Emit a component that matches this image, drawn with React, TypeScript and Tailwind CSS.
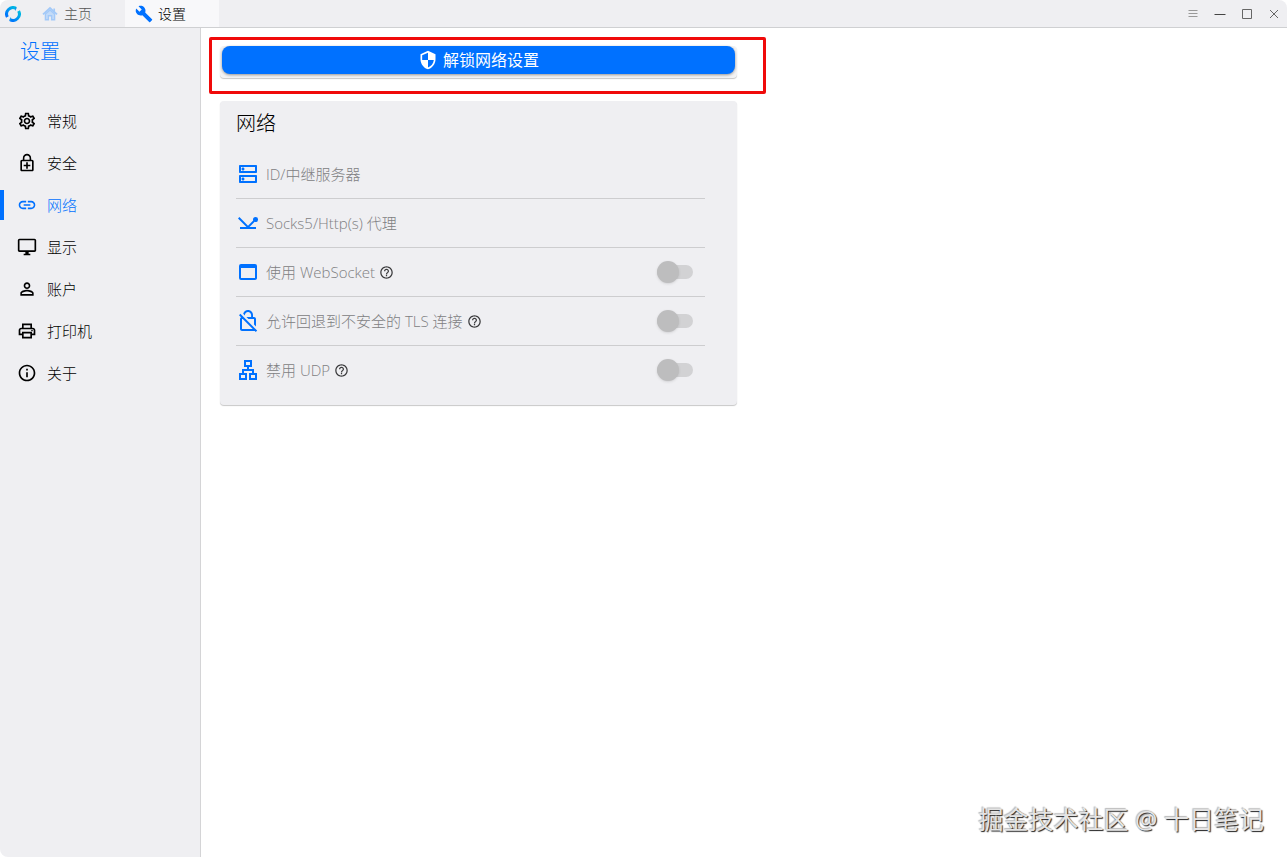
import type { ReactNode } from "react";
import type { IconType } from "react-icons";
import {
  MdBuild,
  MdHelpOutline,
  MdInfoOutline,
  MdLink,
  MdOutlineDesktopWindows,
  MdOutlineDns,
  MdOutlineEnhancedEncryption,
  MdOutlineLan,
  MdOutlineNetworkPing,
  MdOutlineNoEncryption,
  MdOutlinePrint,
  MdOutlineSettings,
  MdOutlineWebAsset,
  MdPersonOutline,
  MdSecurity,
} from "react-icons/md";

type NavItem = { label: string; icon: IconType; active?: boolean };

const navItems: NavItem[] = [
  { label: "常规", icon: MdOutlineSettings },
  { label: "安全", icon: MdOutlineEnhancedEncryption },
  { label: "网络", icon: MdLink, active: true },
  { label: "显示", icon: MdOutlineDesktopWindows },
  { label: "账户", icon: MdPersonOutline },
  { label: "打印机", icon: MdOutlinePrint },
  { label: "关于", icon: MdInfoOutline },
];

const links = [
  { label: "ID/中继服务器", icon: MdOutlineDns },
  { label: "Socks5/Http(s) 代理", icon: MdOutlineNetworkPing },
];

const toggles = [
  { id: "websocket", label: "使用 WebSocket", icon: MdOutlineWebAsset },
  { id: "tls", label: "允许回退到不安全的 TLS 连接", icon: MdOutlineNoEncryption },
  { id: "udp", label: "禁用 UDP", icon: MdOutlineLan },
];

function Logo() {
  return (
    <svg viewBox="0 0 32 32" className="size-4" fill="none" strokeWidth="6" aria-hidden="true">
      <defs>
        <linearGradient id="ring" x1="0" y1="1" x2="1" y2="0">
          <stop offset="0" stopColor="#0071ff" />
          <stop offset="1" stopColor="#00bde1" />
        </linearGradient>
      </defs>
      <path d="M22 4.8A12.7 12.7 0 0 0 4.8 22" stroke="url(#ring)" />
      <path d="M10 27.2A12.7 12.7 0 0 0 27.2 10" stroke="url(#ring)" />
      <path d="M20 1.5l3.5 2-3 7z M12 30.5l-3.5-2 3-7z" fill="#0795f0" />
    </svg>
  );
}

function HomeIcon() {
  return (
    <svg viewBox="0 0 16 16" className="size-4" fill="none" stroke="#a3c9f8" strokeWidth="1.7" aria-hidden="true">
      <path d="M1 8.4 8 2l7 6.4" />
      <path d="M12.2 2.5v3.5" />
      <path d="M3.4 8 8 4l4.6 4v5.8H9.6V9.8H6.4v4H3.4z" fill="#c3dbf8" strokeWidth="1.4" />
    </svg>
  );
}

function WindowButton({ label, children }: { label: string; children: ReactNode }) {
  return (
    <button type="button" aria-label={label} className="flex h-7 w-[27px] items-center justify-center">
      <svg viewBox="0 0 12 12" className="size-3" fill="none" stroke="#666" aria-hidden="true">
        {children}
      </svg>
    </button>
  );
}

function TitleBar() {
  return (
    <header className="flex h-7 items-stretch justify-between border-b border-[#cfd0d2] bg-[#efeff2]">
      <div className="flex items-stretch">
        <div className="flex w-[34px] items-center pl-[5px]">
          <Logo />
        </div>
        <nav className="flex items-stretch text-sm">
          <a href="#home" className="flex w-[91px] items-center gap-1.5 pl-2 text-[#555]">
            <HomeIcon />
            主页
          </a>
          <a href="#settings" className="flex w-[94px] items-center gap-1 bg-[#f8f8fa] pl-[9px] text-black">
            <MdBuild className="size-5 p-px text-[#0071ff]" />
            设置
          </a>
        </nav>
      </div>
      <div className="flex items-center">
        <WindowButton label="菜单">
          <path d="M1.5 2.5h9M1.5 5.5h9M1.5 8.5h9" stroke="#999" />
        </WindowButton>
        <WindowButton label="最小化">
          <path d="M.5 6.5h11" stroke="#444" />
        </WindowButton>
        <WindowButton label="最大化">
          <path d="M1.5 1.5h9v9h-9z" />
        </WindowButton>
        <WindowButton label="关闭">
          <path d="m2 2 8 8M10 2l-8 8" />
        </WindowButton>
      </div>
    </header>
  );
}

function Sidebar() {
  return (
    <aside className="w-[201px] shrink-0 border-r border-[#d4d4d6] bg-[#efeff2]">
      <h1 className="px-5 pt-2 text-xl/8 text-[#0071ff]">设置</h1>
      <nav className="mt-8 flex flex-col">
        {navItems.map(({ label, icon: Icon, active }) => (
          <a
            key={label}
            href={"#" + label}
            className={
              active
                ? "flex h-[42px] items-center text-[#0071ff]"
                : "flex h-[42px] items-center text-black"
            }
          >
            <span className={active ? "h-[30px] w-1 bg-[#0071ff]" : "h-[30px] w-1"} />
            <Icon className="mr-2.5 ml-[13px] size-5" />
            {label}
          </a>
        ))}
      </nav>
    </aside>
  );
}

function Switch({ id }: { id: string }) {
  return (
    <span className="relative mr-3 flex h-[22px] w-9 items-center">
      <input
        id={id}
        type="checkbox"
        role="switch"
        disabled
        className="h-3.5 w-full appearance-none rounded-full bg-[#d2d2d4]"
      />
      <span className="pointer-events-none absolute top-0 left-0 size-[22px] rounded-full bg-[#bdbdbe] shadow-sm" />
    </span>
  );
}

const rowClass = "flex h-[49px] items-center border-b border-[#cdcdcf] text-[#808082] last:border-transparent";

function NetworkCard() {
  return (
    <section className="rounded bg-[#efeff2] pr-8 pb-2.5 pl-4 shadow-[0_1px_1px_rgba(0,0,0,0.22)]">
      <h2 className="pt-[9px] text-xl/7 text-black">网络</h2>
      <div className="mt-3">
        {links.map(({ label, icon: Icon }) => (
          <button key={label} type="button" disabled className={rowClass + " w-full"}>
            <Icon className="mr-1.5 size-6 text-[#0071ff]" />
            {label}
          </button>
        ))}
        {toggles.map(({ id, label, icon: Icon }) => (
          <div key={id} className={rowClass}>
            <Icon className="mr-1.5 size-6 text-[#0071ff]" />
            <label htmlFor={id}>{label}</label>
            <MdHelpOutline className="ml-1 size-[15px] text-[#3a3a3c]" />
            <span className="ml-auto">
              <Switch id={id} />
            </span>
          </div>
        ))}
      </div>
    </section>
  );
}

export default function App() {
  return (
    <div className="flex min-h-screen flex-col overflow-hidden rounded-lg bg-white font-['Open_Sans','Noto_Sans_CJK_SC',sans-serif] text-[15px] font-light">
      <TitleBar />
      <div className="flex grow items-stretch">
        <Sidebar />
        <main className="relative grow pt-[9px] pl-2">
          <div className="max-w-[557px] rounded-xs border-3 border-[#f00a0a] pt-1.5 pr-[26px] pb-[13px] pl-2">
            <div className="rounded bg-[#f4f4f5] px-0.5 pb-1 shadow-[0_1px_1px_rgba(0,0,0,0.22)]">
              <button
                type="button"
                className="flex h-7 w-full items-center justify-center gap-[5px] rounded-lg bg-[#0071ff] text-base font-normal text-white shadow-[0_1px_3px_rgba(0,0,0,0.4)]"
              >
                <MdSecurity className="size-5" />
                解锁网络设置
              </button>
            </div>
          </div>
          <div className="mt-[7px] ml-[11px] max-w-[517px]">
            <NetworkCard />
          </div>
          <p className="absolute right-[23px] bottom-5 text-[25px]/9 font-normal text-[#e4e4e4] [text-shadow:1px_1px_1px_#222,-1px_-1px_1px_#bbb]">
            掘金技术社区 @ 十日笔记
          </p>
        </main>
      </div>
    </div>
  );
}
